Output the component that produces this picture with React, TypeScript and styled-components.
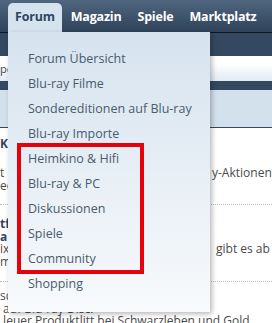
import styled, { createGlobalStyle } from "styled-components";

const Global = createGlobalStyle`
  body {
    margin: 0;
    background: #fff;
    font-family: "Open Sans", "DejaVu Sans", sans-serif;
  }
`;

const Page = styled.div`
  position: relative;
  width: 272px;
  height: 323px;
  overflow: hidden;
  background: #fff;
`;

const NavBar = styled.div`
  height: 32px;
  display: flex;
  align-items: flex-end;
  padding-left: 8px;
  background: linear-gradient(#4f667e, #2e435a);
  border-bottom: 1px solid #0e1822;
`;

const Tab = styled.div<{ $active?: boolean }>`
  height: 29px;
  padding: 0 7px 3px;
  display: flex;
  align-items: center;
  box-sizing: border-box;
  border-radius: 5px 5px 0 0;
  font-size: 12.5px;
  letter-spacing: -0.2px;
  font-weight: 700;
  color: ${(p) => (p.$active ? "#2f4660" : "#fff")};
  background: ${(p) => (p.$active ? "#d5e3ef" : "transparent")};
  & + & {
    margin-left: 2px;
  }
`;

const DarkBand = styled.div<{ $h: number }>`
  height: ${(p) => p.$h}px;
  background: #34495f;
`;

const WhiteBar = styled.div`
  height: 25px;
  display: flex;
  align-items: center;
  background: linear-gradient(#ffffff 30%, #e2eaf3);
  font-size: 11px;
  color: #3a4b5c;
`;

const LightBand = styled.div`
  height: 37px;
  background: #d3e1ed;
  border-bottom: 1px solid #34495e;
`;

const Content = styled.div`
  padding-top: 9px;
  font-size: 12px;
  color: #4a4a4a;
`;

const Row = styled.div<{ $bold?: boolean; $h?: number }>`
  height: ${(p) => p.$h ?? 12.5}px;
  line-height: ${(p) => p.$h ?? 12.5}px;
  display: grid;
  grid-template-columns: 210px 1fr;
  white-space: nowrap;
  font-weight: ${(p) => (p.$bold ? 700 : 400)};
  color: ${(p) => (p.$bold ? "#2f4660" : "#4a4a4a")};
`;

const Right = styled.span<{ $pad: number }>`
  padding-left: ${(p) => p.$pad}px;
`;

const Dotted = styled.div<{ $top: number; $bottom: number }>`
  margin: ${(p) => p.$top}px 0 ${(p) => p.$bottom}px;
  border-top: 1px dotted #b8c0c8;
`;

const Dropdown = styled.ul`
  position: absolute;
  top: 32px;
  left: 8px;
  width: 202px;
  height: 280px;
  margin: 0;
  padding: 14px 0 0;
  box-sizing: border-box;
  list-style: none;
  background: linear-gradient(#d6e3ef, #f8fafc);
  box-shadow: 2px 2px 5px rgba(0, 0, 0, 0.28);
`;

const Item = styled.li`
  height: 25px;
  line-height: 25px;
  padding-left: 20px;
  font-size: 12.5px;
  color: #4a5b6c;
`;

const Highlight = styled.div`
  position: absolute;
  left: 17px;
  top: 143px;
  width: 127px;
  height: 131px;
  box-sizing: border-box;
  border: 4px solid #e8000b;
`;

const items = [
  "Forum Übersicht",
  "Blu-ray Filme",
  "Sondereditionen auf Blu-ray",
  "Blu-ray Importe",
  "Heimkino & Hifi",
  "Blu-ray & PC",
  "Diskussionen",
  "Spiele",
  "Community",
  "Shopping",
];

export default function App() {
  return (
    <Page>
      <Global />
      <NavBar>
        <Tab $active>Forum</Tab>
        <Tab>Magazin</Tab>
        <Tab>Spiele</Tab>
        <Tab>Marktplatz</Tab>
      </NavBar>
      <DarkBand $h={23} />
      <WhiteBar>po</WhiteBar>
      <DarkBand $h={9} />
      <LightBand />
      <Content>
        <Row $bold $h={14}>
          <span>K</span>
        </Row>
        <Row $h={16} />
        <Row>
          <span>t</span>
          <Right $pad={2}>y-Aktionen</Right>
        </Row>
        <Row>
          <span>ed</span>
        </Row>
        <Dotted $top={12} $bottom={13} />
        <Row $bold>
          <span>tf</span>
        </Row>
        <Row $bold>
          <span>a</span>
        </Row>
        <Row>
          <span>ix</span>
          <Right $pad={6}>gibt es ab</Right>
        </Row>
        <Row>
          <span>m</span>
        </Row>
        <Dotted $top={13} $bottom={8} />
        <Row>
          <span>sd</span>
        </Row>
        <Row>
          <span>&nbsp;auf Blu-ray Disc.</span>
        </Row>
        <Row>
          <span>&nbsp;leuer Produktlitt bei Schwarzleben und Gold</span>
        </Row>
      </Content>
      <Dropdown>
        {items.map((t) => (
          <Item key={t}>{t}</Item>
        ))}
      </Dropdown>
      <Highlight />
    </Page>
  );
}
